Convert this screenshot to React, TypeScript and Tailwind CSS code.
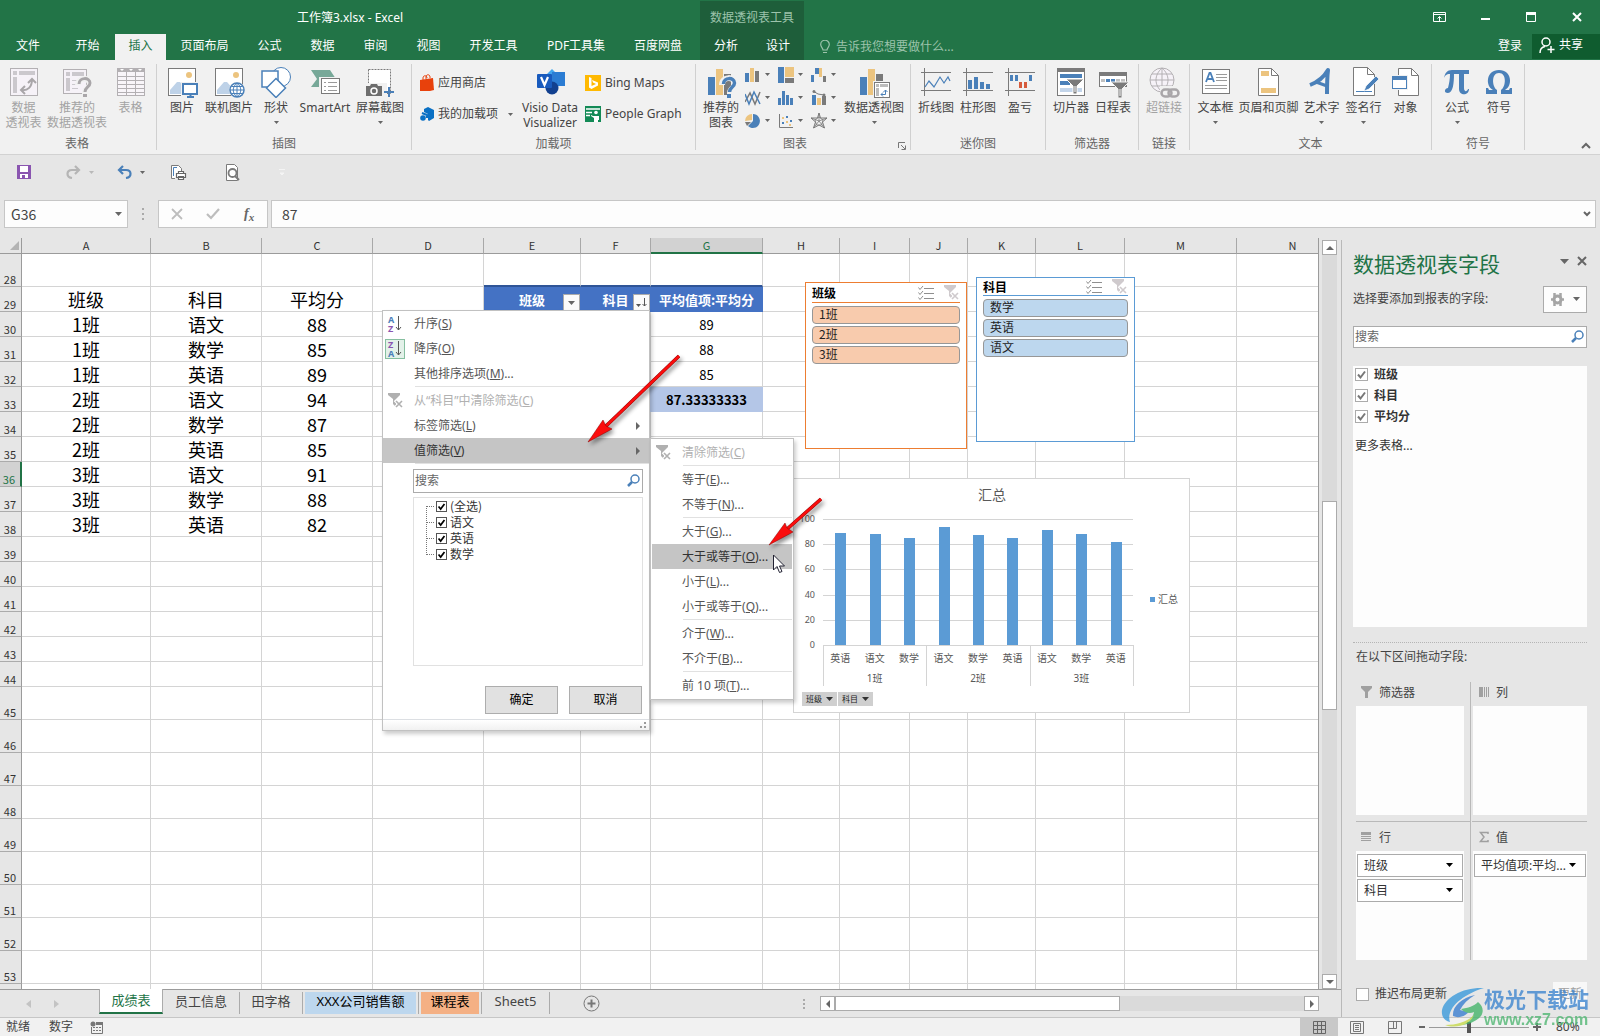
import { useState } from 'react'
import type { ReactNode } from 'react'

type IconProps = { children: ReactNode; w?: number; h?: number; className?: string }

const BLUE = '#4a80b9'
const SAND = '#ecc47f'
const GRAY = '#7a7a7a'
const PALE = '#b3b0b3'

function Svg({ children, w = 32, h = 32, className = '' }: IconProps) {
  return (
    <svg width={w} height={h} viewBox={`0 0 ${w} ${h}`} fill="none" className={`shrink-0 ${className}`} aria-hidden="true">
      {children}
    </svg>
  )
}

function Caret({ color = '#666', w = 5, className = '' }: { color?: string; w?: number; className?: string }) {
  return (
    <svg width={w} height={w === 5 ? 3 : w === 7 ? 4 : 5} viewBox="0 0 10 6" preserveAspectRatio="none" className={`shrink-0 ${className}`} aria-hidden="true">
      <path d="M0 0h10L5 6z" fill={color} />
    </svg>
  )
}

/* ---------- Ribbon icons ---------- */

const PivotTableIcon = () => (
  <Svg>
    <rect x="2.5" y="2.5" width="27" height="27" fill="#f6f2f8" stroke={PALE} />
    <path d="M5 5h4v4H5zM11 5h16v4H11zM5 11h4v16H5z" fill="#cbc8cd" />
    <path d="M13 24c7 1 11-3 11-11M17 20l-4 4 4 4M20 17l4-4 4 4" stroke="#a9a6a9" strokeWidth="2" />
  </Svg>
)

const RecommendedPivotIcon = () => (
  <Svg>
    <rect x="2.5" y="3.5" width="23" height="24" fill="#f6f2f8" stroke={PALE} />
    <path d="M5 6h4v4H5zM11 6h12v4H11zM5 12h4v13H5z" fill="#cbc8cd" />
    <path d="M11 14.5h8M11 18.5h6M11 22.500h6" stroke="#cbc8cd" />
    <path d="M17 19c0-8 12-8 12-1 0 4-5 4-5 8v6" stroke="#f1f1f1" strokeWidth="6" />
    <path d="M18 18c0-7 11-7 11-1 0 4-5 4-5 9" stroke="#a9a6a9" strokeWidth="3" />
    <path d="M22 28h4v3h-4z" fill="#a9a6a9" />
  </Svg>
)

const TableIcon = () => (
  <Svg>
    <rect x="2.5" y="2.5" width="27" height="27" fill="#f8f5f9" stroke={PALE} />
    <path d="M2 2h28v4H2z" fill={PALE} />
    <path d="M5 3h4L7 5zM14 3h4l-2 2zM23 3h4l-2 2z" fill="#fff" />
    <path d="M11.5 6v24M20.5 6v24M2 10.5h28M2 14.5h28M2 18.5h28M2 22.5h28M2 26.5h28" stroke={PALE} />
  </Svg>
)

const photo = (
  <>
    <rect x="2.5" y="2.5" width="27" height="27" fill="#fff" stroke={GRAY} />
    <path d="M4 28v-4l7-8h3l7 8v4z" fill="#bed2e8" />
    <circle cx="23" cy="9" r="3" fill={SAND} />
  </>
)

const PictureIcon = () => (
  <Svg>
    {photo}
    <path d="M15 16h17v16H15z" fill="#f1f1f1" />
    <rect x="17" y="18" width="14" height="10" fill="#fff" stroke={BLUE} strokeWidth="2" />
    <path d="M21 31h7M24.5 29v2" stroke={BLUE} strokeWidth="2" />
  </Svg>
)

const OnlinePictureIcon = () => (
  <Svg>
    {photo}
    <circle cx="24" cy="24" r="8" fill="#f1f1f1" />
    <circle cx="24" cy="24" r="7" fill="#fff" stroke={BLUE} strokeWidth="1.5" />
    <path d="M24 17v14M17 24h14M18.5 20.5h11M18.5 27.5h11M24 17c-5 4-5 10 0 14M24 17c5 4 5 10 0 14" stroke={BLUE} />
  </Svg>
)

const ShapesIcon = () => (
  <Svg>
    <circle cx="21" cy="11" r="9.5" fill="#fff" stroke={BLUE} />
    <rect x="2" y="5" width="16" height="16" fill="#fff" stroke={BLUE} strokeWidth="1.5" />
    <path d="M16 12.5l9.5 9.5-9.5 9.5L6.500 22z" fill="#fff" stroke={BLUE} strokeWidth="1.5" />
  </Svg>
)

const SmartArtIcon = () => (
  <Svg>
    <path d="M2 4h19l6 9-6 8H2l6-8z" fill="#77a898" />
    <path d="M10 11h22v19H10z" fill="#f1f1f1" />
    <rect x="12.5" y="12.5" width="18" height="15" fill="#fff" stroke={GRAY} />
    <path d="M15 16.5h2M19 16.5h9M15 20.5h2M19 20.5h9M15 24.5h2M19 24.5h9" stroke="#9b9b9b" />
  </Svg>
)

const ScreenshotIcon = () => (
  <Svg>
    <rect x="4.5" y="3.5" width="22" height="24" fill="#fff" stroke={GRAY} strokeDasharray="2 1" />
    <path d="M1 17h22v14H1z" fill="#f1f1f1" />
    <path d="M2 20h4l1-2h6l1 2h4v10H2z" fill="#6e6e6e" />
    <circle cx="10" cy="25" r="3" stroke="#fff" strokeWidth="1.5" />
    <path d="M20 26h10M25 21v10" stroke={BLUE} strokeWidth="2" />
  </Svg>
)

const StoreIcon = () => (
  <Svg w={14} h={18}>
    <path d="M0 6l13-2 1 12-4 1H0z" fill="#e8410c" />
    <path d="M3 6V4c0-3 4-3 4 0M6 5V3c0-3 4-3 4 0v1" stroke="#e8410c" />
  </Svg>
)

const MyAddinsIcon = () => (
  <Svg w={14} h={16}>
    <path d="M8 1l6 3v8l-5 3-1-1V8L4 6V3z" fill="#0a70c4" />
    <circle cx="3" cy="12" r="2.800" fill="#0a70c4" />
    <path d="M2 7l5 2v3" stroke="#0a70c4" strokeWidth="2" />
  </Svg>
)

const VisioIcon = () => (
  <Svg>
    <path d="M18 3l8 8-8 8-8-8z" fill="#41a5ee" />
    <path d="M18 6h13v14H18z" fill="#2b7cd3" />
    <circle cx="18" cy="22" r="6.500" fill="#12408f" />
    <rect x="3" y="8" width="15" height="14" rx="1" fill="#185abd" />
    <path d="M7 11l3.500 8L14 11" stroke="#fff" strokeWidth="2.200" />
  </Svg>
)

const BingIcon = () => (
  <Svg w={16} h={16}>
    <path d="M0 0h16v16H0z" fill="#ffb901" />
    <path d="M4 2l2.500 1v8L11 9 8 7.500 7 5l6 2.500v3L6.500 14 4 12.500z" fill="#fff" />
  </Svg>
)

const PeopleGraphIcon = () => (
  <Svg w={16} h={16}>
    <path d="M0 0h16v16H0z" fill="#138a56" />
    <path d="M1 3h14M1 6.5h6M1 9.5h4" stroke="#fff" strokeWidth="1.500" />
    <circle cx="11" cy="6.5" r="1.800" fill="#fff" />
    <path d="M6 9l2 1h6v4h-1v2H9v-4L6 10z" fill="#fff" />
  </Svg>
)

const RecommendedChartIcon = () => (
  <Svg>
    <path d="M3 11h7v18H3z" fill={BLUE} />
    <path d="M11 3h7v26h-7z" fill={SAND} />
    <path d="M19 8h7v21h-7z" fill={GRAY} />
    <path d="M17 19c0-9 13-9 13-1 0 4-5 4-5 9v5" stroke="#f1f1f1" strokeWidth="6" />
    <path d="M18.500 18c0-7 11-7 11-1 0 4-5 4-5 9" stroke={BLUE} strokeWidth="3.500" />
    <path d="M22 28h4v4h-4z" fill={BLUE} />
  </Svg>
)

const PivotChartIcon = () => (
  <Svg>
    <path d="M2 11h7v18H2z" fill={BLUE} />
    <path d="M10 3h7v26h-7z" fill={SAND} />
    <path d="M18 8h7v12h-7z" fill={GRAY} />
    <rect x="15" y="15" width="17" height="17" fill="#f1f1f1" />
    <rect x="16.5" y="16.5" width="15" height="15" fill="#fff" stroke={GRAY} />
    <path d="M18 18h3v3h-3zM22 18h8v3h-8zM18 22h3v8h-3z" fill="#bcbcbc" />
    <path d="M23 28.5h4.500V24M25 26.500l-2 2 2 2M25.500 26l2-2 2 2" stroke={BLUE} />
  </Svg>
)

const axis = <path d="M4.5 2v28M1 6.5h30M1 24.5h30" stroke={GRAY} />

const SparkLineIcon = () => (
  <Svg>
    {axis}
    <path d="M5 21l4-6 5 6 6-10 4 6 4-6 2 4" stroke={BLUE} strokeWidth="1.200" />
  </Svg>
)

const SparkColumnIcon = () => (
  <Svg>
    {axis}
    <path d="M6 14h4v9H6zM12 11h4v12h-4zM18 16h4v7h-4zM24 18h4v5h-4z" fill={BLUE} />
  </Svg>
)

const WinLossIcon = () => (
  <Svg>
    {axis}
    <path d="M6 9h3v6H6zM11 9h3v6h-3zM25 9h3v6h-3z" fill={BLUE} />
    <path d="M15 16h3v6h-3zM20 16h3v6h-3z" fill="#d65b3c" />
  </Svg>
)

const SlicerIcon = () => (
  <Svg>
    <rect x="2.5" y="2.5" width="27" height="27" fill="#fff" stroke={GRAY} />
    <path d="M2 2h28v4H2z" fill={GRAY} />
    <path d="M5 8h22v4H5zM5 15h10v4H5z" fill={BLUE} />
    <path d="M5 22h22v4H5z" fill="#c3d5ea" />
    <path d="M11 13h18l-7 7v8h-4v-8z" fill={GRAY} stroke="#fff" />
    <path d="M20 20v6" stroke="#fff" />
  </Svg>
)

const TimelineIcon = () => (
  <Svg>
    <rect x="2.5" y="6.5" width="27" height="14" fill="#fff" stroke={GRAY} />
    <path d="M2 6h28v4H2z" fill={GRAY} />
    <path d="M4 13h4v3H4zM19 13h4v3h-4zM24 13h4v3h-4z" fill="#c0c0c0" />
    <path d="M9 13h4v3H9zM14 13h4v3h-4z" fill={BLUE} />
    <path d="M14 16h18l-7 7v9h-4v-9z" fill={GRAY} stroke="#f1f1f1" />
    <path d="M23 23v7" stroke="#fff" />
  </Svg>
)

const HyperlinkIcon = () => (
  <Svg>
    <circle cx="14" cy="14" r="12" fill="#f6f2f8" stroke={PALE} />
    <path d="M14 2v24M2 14h24M4 8h20M4 20h20M14 2c-8 7-8 17 0 24M14 2c8 7 8 17 0 24" stroke={PALE} />
    <path d="M12 20h20v12H12z" fill="#f1f1f1" />
    <rect x="13.500" y="23.500" width="10" height="7" rx="3.500" stroke="#a9a6a9" strokeWidth="2.500" />
    <rect x="20.500" y="23.500" width="10" height="7" rx="3.500" stroke="#a9a6a9" strokeWidth="2.500" />
  </Svg>
)

const TextBoxIcon = () => (
  <Svg>
    <rect x="2.5" y="3.5" width="27" height="24" fill="#fff" stroke={GRAY} />
    <path d="M6 16L9.500 7h1L14 16M7.500 13h5" stroke={BLUE} strokeWidth="1.800" />
    <path d="M16 8.5h11M16 11.5h11M16 14.5h11M5 19.5h22M5 22.5h22" stroke="#9b9b9b" />
  </Svg>
)

const HeaderFooterIcon = () => (
  <Svg>
    <path d="M5.5 2.5h13l7 7v20h-20z" fill="#fff" stroke={GRAY} />
    <path d="M18.5 2.5v7h7" stroke={GRAY} />
    <path d="M8 5h8v5H8zM8 22h15v5H8z" fill={SAND} />
  </Svg>
)

const WordArtIcon = () => (
  <Svg>
    <path d="M4 19c8-3 14-8 18-15-1 8-1 16-1 24" stroke={BLUE} strokeWidth="4" strokeLinejoin="round" />
    <path d="M10 16l11 4" stroke={BLUE} strokeWidth="3" />
  </Svg>
)

const SignatureIcon = () => (
  <Svg>
    <path d="M5.5 1.5h14l7 7v21h-21z" fill="#fff" stroke={GRAY} />
    <path d="M19.5 1.5v7h7" stroke={GRAY} />
    <path d="M8 25.5h16" stroke={BLUE} />
    <path d="M16 25l2-5L28 10l3 3-10 10z" fill={BLUE} stroke="#fff" strokeWidth="0.700" />
  </Svg>
)

const ObjectIcon = () => (
  <Svg>
    <path d="M8.5 2.5h13l7 7v20h-20z" fill="#fff" stroke={GRAY} />
    <path d="M21.5 2.5v7h7" stroke={GRAY} />
    <path d="M1 9h17v15H1z" fill="#f1f1f1" />
    <rect x="2.5" y="10.5" width="14" height="12" fill="#fff" stroke={BLUE} />
    <path d="M2 10h15v4H2z" fill={BLUE} />
  </Svg>
)

const EquationIcon = () => (
  <Svg>
    <path d="M3 12c1-5 3-8 8-8h17v4h-5v14c0 4 3 4 4 1h1c0 7-10 7-10 0V8h-5c0 9-1 19-6 19-5 0-3-5 0-5 1-4 2-9 2-14-4 0-5 2-6 4z" fill={BLUE} />
  </Svg>
)

const SymbolIcon = () => (
  <Svg>
    <path d="M3 28v-6h2l1 2h4C2 20 3 4 16 4s14 16 6 20h4l1-2h2v6H18v-4c5-3 6-17-2-17s-7 14-2 17v4z" fill={BLUE} />
  </Svg>
)

/* ---------- Small chart pickers ---------- */

const chartPickers: { name: string; icon: ReactNode }[] = [
  {
    name: '柱形图',
    icon: (
      <>
        <path d="M0 6h4v9H0z" fill={BLUE} />
        <path d="M5 1h4v14H5z" fill={SAND} />
        <path d="M10 4h4v11h-4z" fill={GRAY} />
      </>
    ),
  },
  {
    name: '层次结构图',
    icon: (
      <>
        <path d="M0 0h6v16H0z" fill={BLUE} />
        <path d="M7 0h9v10H7z" fill={SAND} />
        <path d="M7 11h9v5H7z" fill={GRAY} />
      </>
    ),
  },
  {
    name: '瀑布图',
    icon: (
      <>
        <path d="M0 8h3v7H0zM4 1h4v6H4z" fill={BLUE} />
        <path d="M8 1h3v9H8z" fill={SAND} />
        <path d="M12 9h3v6h-3z" fill={GRAY} />
      </>
    ),
  },
  {
    name: '折线图',
    icon: (
      <>
        <path d="M0 12l5-9 5 11 5-12" stroke={GRAY} strokeWidth="1.500" />
        <path d="M0 4l4 10L9 2l6 12" stroke={BLUE} strokeWidth="1.500" />
      </>
    ),
  },
  {
    name: '统计图',
    icon: <path d="M0 8h3v7H0zM4 1h3v14H4zM8 5h3v10H8zM12 8h3v7h-3z" fill={BLUE} />,
  },
  {
    name: '组合图',
    icon: (
      <>
        <path d="M1 5h4v10H1z" fill={BLUE} />
        <path d="M6 8h4v7H6z" fill={SAND} />
        <path d="M11 6h4v9h-4z" fill={GRAY} />
        <path d="M2 1l5 3 6 1" stroke={GRAY} />
        <circle cx="3" cy="1.500" r="1.500" fill={GRAY} />
        <circle cx="13" cy="5" r="1.500" fill={GRAY} />
      </>
    ),
  },
  {
    name: '饼图',
    icon: (
      <>
        <path d="M7 7V1a7 7 0 0 0-7 7z" fill={SAND} />
        <path d="M8 1a7 7 0 1 1-5 12l5-5z" fill={BLUE} />
        <path d="M0 9h6l-4 4z" fill={GRAY} />
      </>
    ),
  },
  {
    name: '散点图',
    icon: (
      <>
        <path d="M1.500 1v13.500H15" stroke={GRAY} />
        <path d="M4 9h2v2H4zM8 3h2v2H8zM12 7h2v2h-2z" fill={BLUE} />
        <path d="M4 4h2v2H4zM8 8h2v2H8zM11 11h2v2h-2z" fill={SAND} />
      </>
    ),
  },
  {
    name: '雷达图',
    icon: (
      <>
        <path d="M8 0l1.500 5H16l-4.500 4 2 6L8 12l-5.500 3 2-6L0 5h6.500z" stroke={GRAY} />
        <path d="M8 4l4 3-1.500 5h-5L4 7zM8 0v8l8-3M8 8l5.500 7M8 8l-5.500 7M8 8L0 5" stroke={GRAY} strokeWidth="0.800" />
      </>
    ),
  },
]

/* ---------- Ribbon ---------- */

type BigProps = { icon: ReactNode; lines: string[]; width: string; caret?: boolean; disabled?: boolean }

function BigButton({ icon, lines, width, caret, disabled }: BigProps) {
  return (
    <button
      type="button"
      disabled={disabled}
      className={`flex shrink-0 flex-col items-center text-xs leading-[15px] whitespace-nowrap ${width} ${disabled ? 'text-[#a3a3a3]' : 'text-[#444]'}`}
    >
      <span className="mb-[2px]">{icon}</span>
      {lines.map((line) => (
        <span key={line}>{line}</span>
      ))}
      {caret && <Caret className="mt-[6px]" />}
    </button>
  )
}

type GroupProps = { label: string; width: string; children: ReactNode; launcher?: boolean }

function Group({ label, width, children, launcher }: GroupProps) {
  return (
    <section className={`relative mt-1 flex h-[86px] shrink-0 flex-col border-r border-[#d0d0d0] ${width}`}>
      <div className="flex flex-1 justify-center pt-[2px]">{children}</div>
      <h2 className={`h-[14px] text-center text-xs leading-4 text-[#666] ${launcher ? 'pr-4' : ''}`}>{label}</h2>
      {launcher && (
        <button type="button" aria-label="查看所有图表" className="absolute right-[4px] bottom-0">
          <Svg w={8} h={8}>
            <path d="M.5 6V.5H7M3 3l4 4M7.500 3.500v4h-4" stroke="#777" />
          </Svg>
        </button>
      )}
    </section>
  )
}

function Ribbon() {
  return (
    <div className="relative flex h-[95px] shrink-0 border-b border-[#d2d2d2] bg-[#f1f1f1]">
      <Group label="表格" width="w-[157px] pr-[2px]">
        <BigButton icon={<PivotTableIcon />} lines={['数据', '透视表']} width="w-[42px]" disabled />
        <BigButton icon={<RecommendedPivotIcon />} lines={['推荐的', '数据透视表']} width="w-[65px]" disabled />
        <BigButton icon={<TableIcon />} lines={['表格']} width="w-[42px]" disabled />
      </Group>
      <Group label="插图" width="w-[255px]">
        <BigButton icon={<PictureIcon />} lines={['图片']} width="w-[40px]" />
        <BigButton icon={<OnlinePictureIcon />} lines={['联机图片']} width="w-[54px]" />
        <BigButton icon={<ShapesIcon />} lines={['形状']} width="w-[40px]" caret />
        <BigButton icon={<SmartArtIcon />} lines={['SmartArt']} width="w-[58px]" />
        <BigButton icon={<ScreenshotIcon />} lines={['屏幕截图']} width="w-[52px]" caret />
      </Group>
      <Group label="加载项" width="w-[284px]">
        <div className="flex flex-1 pl-2 text-xs text-[#444]">
          <div className="flex w-[98px] flex-col gap-[15px] pt-[9px]">
            <button type="button" className="flex h-4 items-center gap-[4px] whitespace-nowrap">
              <StoreIcon />
              应用商店
            </button>
            <button type="button" className="flex h-4 items-center gap-[4px] whitespace-nowrap">
              <MyAddinsIcon />
              我的加载项
              <Caret className="ml-[6px]" />
            </button>
          </div>
          <BigButton icon={<VisioIcon />} lines={['Visio Data', 'Visualizer']} width="w-[64px]" />
          <div className="flex flex-col gap-[15px] pt-[9px] pl-[3px]">
            <button type="button" className="flex h-4 items-center gap-[4px] whitespace-nowrap">
              <BingIcon />
              Bing Maps
            </button>
            <button type="button" className="flex h-4 items-center gap-[4px] whitespace-nowrap">
              <PeopleGraphIcon />
              People Graph
            </button>
          </div>
        </div>
      </Group>
      <Group label="图表" width="w-[215px]" launcher>
        <BigButton icon={<RecommendedChartIcon />} lines={['推荐的', '图表']} width="w-[40px]" />
        <div className="-mt-[3px] grid grid-cols-[33px_33px_32px] grid-rows-[23px_23px_23px] pl-[4px]">
          {chartPickers.map((c) => (
            <button key={c.name} type="button" aria-label={c.name} className="flex items-center gap-[4px]">
              <Svg w={16} h={16}>
                {c.icon}
              </Svg>
              <Caret />
            </button>
          ))}
        </div>
        <BigButton icon={<PivotChartIcon />} lines={['数据透视图']} width="w-[62px]" caret />
      </Group>
      <Group label="迷你图" width="w-[135px]">
        <BigButton icon={<SparkLineIcon />} lines={['折线图']} width="w-[42px]" />
        <BigButton icon={<SparkColumnIcon />} lines={['柱形图']} width="w-[42px]" />
        <BigButton icon={<WinLossIcon />} lines={['盈亏']} width="w-[42px]" />
      </Group>
      <Group label="筛选器" width="w-[93px]">
        <BigButton icon={<SlicerIcon />} lines={['切片器']} width="w-[42px]" />
        <BigButton icon={<TimelineIcon />} lines={['日程表']} width="w-[42px]" />
      </Group>
      <Group label="链接" width="w-[51px]">
        <BigButton icon={<HyperlinkIcon />} lines={['超链接']} width="w-[42px]" disabled />
      </Group>
      <Group label="文本" width="w-[242px]">
        <BigButton icon={<TextBoxIcon />} lines={['文本框']} width="w-[42px]" caret />
        <BigButton icon={<HeaderFooterIcon />} lines={['页眉和页脚']} width="w-[64px]" />
        <BigButton icon={<WordArtIcon />} lines={['艺术字']} width="w-[42px]" caret />
        <BigButton icon={<SignatureIcon />} lines={['签名行']} width="w-[42px]" caret />
        <BigButton icon={<ObjectIcon />} lines={['对象']} width="w-[42px]" />
      </Group>
      <Group label="符号" width="w-[93px]">
        <BigButton icon={<EquationIcon />} lines={['公式']} width="w-[42px]" caret />
        <BigButton icon={<SymbolIcon />} lines={['符号']} width="w-[42px]" />
      </Group>
      <button type="button" aria-label="折叠功能区" className="mt-auto mr-[9px] mb-[4px] ml-auto">
        <Svg w={10} h={8}>
          <path d="M1 6l4-4 4 4" stroke="#666" strokeWidth="2" />
        </Svg>
      </button>
    </div>
  )
}

/* ---------- Title bar and tabs ---------- */

const tabs = [
  { name: '文件', width: 'w-[60px] pr-[4px]' },
  { name: '开始', width: 'w-[55px]' },
  { name: '插入', width: 'w-[51px]' },
  { name: '页面布局', width: 'w-[77px]' },
  { name: '公式', width: 'w-[53px]' },
  { name: '数据', width: 'w-[53px]' },
  { name: '审阅', width: 'w-[53px]' },
  { name: '视图', width: 'w-[53px]' },
  { name: '开发工具', width: 'w-[77px]' },
  { name: 'PDF工具集', width: 'w-[88px]' },
  { name: '百度网盘', width: 'w-[80px] pr-[4px]' },
]

function TitleBar() {
  return (
    <header className="shrink-0 bg-[#227447] text-xs text-white">
      <div className="flex h-[34px]">
        <h1 className="flex w-[700px] items-center justify-center pt-px">工作簿3.xlsx - Excel</h1>
        <div className="mt-px flex w-[104px] items-center justify-center bg-[#1e5e3a] text-[#9cc3ab]">数据透视表工具</div>
        <div className="flex flex-1 justify-end">
          <button type="button" aria-label="功能区显示选项" className="flex w-[46px] items-center justify-center">
            <Svg w={13} h={10}>
              <path d="M.5.5h12v9H.5zM.5 2.500h12M6.500 9V4.500M4.500 6.500l2-2 2 2" stroke="#fff" />
            </Svg>
          </button>
          <button type="button" aria-label="最小化" className="flex w-[46px] items-center justify-center">
            <Svg w={9} h={10}>
              <path d="M0 6h9v2H0z" fill="#fff" />
            </Svg>
          </button>
          <button type="button" aria-label="最大化" className="flex w-[46px] items-center justify-center">
            <Svg w={10} h={10}>
              <path d="M.5.5h9v9h-9z" stroke="#fff" />
              <path d="M0 0h10v3H0z" fill="#fff" />
            </Svg>
          </button>
          <button type="button" aria-label="关闭" className="flex w-[46px] items-center justify-center">
            <Svg w={10} h={10}>
              <path d="M1 1l8 8M9 1L1 9" stroke="#fff" strokeWidth="2" />
            </Svg>
          </button>
        </div>
      </div>
      <nav className="flex h-[26px]">
        {tabs.map((t) => (
          <button
            key={t.name}
            type="button"
            className={`pb-[3px] text-center whitespace-nowrap ${t.width} ${t.name === '插入' ? 'bg-[#f1f1f1] text-[#227447]' : ''}`}
          >
            {t.name}
          </button>
        ))}
        <button type="button" className="w-[52px] bg-[#1e5e3a] pb-[3px]">分析</button>
        <button type="button" className="w-[52px] bg-[#1e5e3a] pb-[3px]">设计</button>
        <label className="ml-[16px] flex items-center gap-[6px]">
          <Svg w={10} h={14}>
            <path d="M3 10C3 8 .7 7 .7 4.500a4.300 4.300 0 0 1 8.600 0C9.300 7 7 8 7 10zM3 12.500h4" stroke="#9cc3ab" strokeWidth="1.200" />
          </Svg>
          <input aria-label="告诉我您想要做什么" placeholder="告诉我您想要做什么..." className="w-[150px] bg-transparent pb-px outline-none placeholder:text-[#9cc3ab]" />
        </label>
        <button type="button" className="ml-auto w-[44px] pb-[3px]">登录</button>
        <button type="button" className="mb-px flex w-[68px] items-center gap-[4px] bg-[#0f5c2f] pb-[3px] pl-[7px]">
          <Svg w={16} h={16}>
            <circle cx="7" cy="5" r="4" stroke="#fff" strokeWidth="1.500" />
            <path d="M1 16c0-4 2-6 5-6.500M12 9v7M8.500 12.500h7" stroke="#fff" strokeWidth="1.500" />
          </Svg>
          共享
        </button>
      </nav>
    </header>
  )
}

/* ---------- Quick access and formula bar ---------- */

function QuickAccess() {
  return (
    <div className="flex h-[34px] items-center pl-[17px]">
      <button type="button" aria-label="保存">
        <Svg w={14} h={14}>
          <path d="M0 0h14v14H0z" fill="#8a55b0" />
          <path d="M3 1h8v6H3zM3 9h8v4H3z" fill="#fff" />
          <path d="M5 10h3v3H5z" fill="#8a55b0" />
        </Svg>
      </button>
      <button type="button" aria-label="恢复" className="ml-[35px] flex items-center gap-[8px]">
        <Svg w={15} h={14}>
          <path d="M9 1l4 4-4 4M13 5H6c-6 0-6 7 0 8" stroke="#b5b5b5" strokeWidth="2.200" />
        </Svg>
        <Caret color="#b9b9b9" />
      </button>
      <button type="button" aria-label="撤消" className="ml-[23px] flex items-center gap-[8px]">
        <Svg w={15} h={14}>
          <path d="M6 1L2 5l4 4M2 5h7c6 0 6 7 0 8" stroke={BLUE} strokeWidth="2.200" />
        </Svg>
        <Caret />
      </button>
      <button type="button" aria-label="快速打印" className="ml-[25px]">
        <Svg w={17} h={17}>
          <path d="M5 14.500H1.500v-13h7l3 3v3" fill="#fff" stroke={GRAY} />
          <path d="M7 3.500H3.500V12" stroke={BLUE} />
          <path d="M8.500 9.500v-2h5v2M6.500 9.500h9v4h-9zM8.500 12.500h5v3h-5z" fill="#fff" stroke="#666" strokeWidth="1.200" />
        </Svg>
      </button>
      <button type="button" aria-label="打印预览" className="ml-[38px]">
        <Svg w={16} h={17}>
          <path d="M1.500.5h8l3 3v13h-11z" fill="#fff" stroke={GRAY} />
          <circle cx="7.500" cy="9" r="4" fill="#fff" stroke={GRAY} strokeWidth="1.800" />
          <path d="M10 12l4 4" stroke={GRAY} strokeWidth="2" />
        </Svg>
      </button>
      <Svg w={6} h={7} className="ml-[38px]">
        <path d="M0 .5h6M1 4h4L3 6z" stroke="#f4f4f4" fill="#f4f4f4" />
      </Svg>
    </div>
  )
}

function FormulaBar() {
  return (
    <div className="mt-[11px] flex h-[28px] shrink-0 px-[4px] text-[#444]">
      <div className="flex w-[124px] items-center border border-[#c6c6c6] bg-[#fdfdfd] pr-[5px] pb-px pl-[6px]">
        <input aria-label="名称框" defaultValue="G36" className="w-full min-w-0 bg-transparent font-['Noto_Sans_CJK_SC',sans-serif] text-sm outline-none" />
        <Caret w={7} />
      </div>
      <div className="flex w-[30px] flex-col items-center justify-center gap-[3px]">
        <i className="size-[2px] bg-[#aaa]" />
        <i className="size-[2px] bg-[#aaa]" />
        <i className="size-[2px] bg-[#aaa]" />
      </div>
      <div className="flex w-[110px] items-center border border-[#c6c6c6] bg-[#fdfdfd] pl-[12px]">
        <Svg w={12} h={12}>
          <path d="M1 1l10 10M11 1L1 11" stroke="#bdbdbd" strokeWidth="1.800" />
        </Svg>
        <Svg w={14} h={12} className="ml-[23px]">
          <path d="M1 6l4 4 8-9" stroke="#bdbdbd" strokeWidth="2.200" />
        </Svg>
        <span className="ml-[24px] font-['Liberation_Serif',serif] text-sm font-bold text-[#666] italic">
          f<sub className="text-[11px]">x</sub>
        </span>
      </div>
      <div className="ml-[3px] flex flex-1 items-center border border-[#c6c6c6] bg-[#fdfdfd] pr-[4px] pb-px pl-[10px]">
        <input aria-label="编辑栏" defaultValue="87" className="flex-1 bg-transparent font-['Noto_Sans_CJK_SC',sans-serif] text-sm outline-none" />
        <Svg w={8} h={6}>
          <path d="M1 1l3 3 3-3" stroke="#666" strokeWidth="2" />
        </Svg>
      </div>
    </div>
  )
}

/* ---------- Sheet ---------- */

const columns = [
  { name: 'A', width: 'w-[129px]' },
  { name: 'B', width: 'w-[111px]' },
  { name: 'C', width: 'w-[111px]' },
  { name: 'D', width: 'w-[111px]' },
  { name: 'E', width: 'w-[97px]' },
  { name: 'F', width: 'w-[70px]' },
  { name: 'G', width: 'w-[112px]' },
  { name: 'H', width: 'w-[77px]' },
  { name: 'I', width: 'w-[70px]' },
  { name: 'J', width: 'w-[58px]' },
  { name: 'K', width: 'w-[68px]' },
  { name: 'L', width: 'w-[89px]' },
  { name: 'M', width: 'w-[112px]' },
  { name: 'N', width: 'w-[112px]' },
]

const scores: Record<number, string[]> = {
  29: ['班级', '科目', '平均分'],
  30: ['1班', '语文', '88'],
  31: ['1班', '数学', '85'],
  32: ['1班', '英语', '89'],
  33: ['2班', '语文', '94'],
  34: ['2班', '数学', '87'],
  35: ['2班', '英语', '85'],
  36: ['3班', '语文', '91'],
  37: ['3班', '数学', '88'],
  38: ['3班', '英语', '82'],
}

const pivot: Record<number, Record<string, string>> = {
  29: { E: '班级', F: '科目', G: '平均值项:平均分' },
  30: { G: '89' },
  31: { G: '88' },
  32: { G: '85' },
  33: { G: '87.33333333' },
}

const LAST_ROW = 54
const rows = Array.from({ length: 27 }, (_, i) => 28 + i)

function cellClass(row: number, col: string) {
  const inPivot = col === 'E' || col === 'F' || col === 'G'
  if (row === 28 && inPivot) return 'border-r border-b-2 border-r-[#d4d4d4] border-b-[#2f5597]'
  if (row === 29 && inPivot) return 'border-r border-b border-[#4472c4] bg-[#4472c4] pt-px text-[13px] font-bold text-white'
  if (row === 33 && inPivot) return 'border-r border-b border-[#b4c6e7] bg-[#b4c6e7] pt-[2px] text-[13px] font-bold text-black'
  if (inPivot) return 'border-r border-b border-[#d4d4d4] pt-[2px] text-[13px] text-black'
  return 'border-r border-b border-[#d4d4d4] text-lg text-black'
}

function FilterButton({ sorted }: { sorted?: boolean }) {
  return (
    <button
      type="button"
      aria-label="筛选"
      className="absolute right-0 bottom-0 flex size-[17px] items-center justify-center border border-[#ababab] bg-[#fbfbfb]"
    >
      {sorted ? (
        <Svg w={13} h={11}>
          <path d="M1 7h5L3.500 10z" fill="#555" />
          <path d="M9.500 1v8M7.500 7l2 2 2-2" stroke="#555" />
        </Svg>
      ) : (
        <Caret w={7} />
      )}
    </button>
  )
}

function SheetTable() {
  return (
    <table className="w-[1349px] table-fixed border-separate border-spacing-0 bg-white font-['Noto_Sans_CJK_SC',sans-serif]">
      <colgroup>
        <col className="w-[22px]" />
        {columns.map((c) => (
          <col key={c.name} className={c.width} />
        ))}
      </colgroup>
      <thead>
        <tr className="h-[16px]">
          <th className="border-r border-b border-[#9b9b9b] bg-[#e6e6e6] p-0">
            <Svg w={9} h={9} className="mr-[2px] ml-auto">
              <path d="M9 0v9H0z" fill="#b3b3b3" />
            </Svg>
          </th>
          {columns.map((c) => (
            <th
              key={c.name}
              scope="col"
              className={`border-r border-r-[#a8a8a8] p-0 align-top text-[11px] leading-[14px] font-normal ${
                c.name === 'G' ? 'border-b-2 border-b-[#217346] bg-[#d2d2d2] text-[#217346]' : 'border-b border-b-[#9b9b9b] bg-[#e6e6e6] text-[#333]'
              }`}
            >
              {c.name}
            </th>
          ))}
        </tr>
      </thead>
      <tbody>
        {rows.map((r) => (
          <tr key={r} className={r === 28 || r > 44 ? 'h-[33px]' : 'h-[25px]'}>
            <th
              scope="row"
              className={`border-b border-b-[#ababab] p-0 pr-[5px] text-right align-bottom text-[11px] leading-[13px] font-normal ${
                r === 36 ? 'border-r-2 border-r-[#217346] bg-[#d2d2d2] text-[#217346]' : 'border-r border-r-[#9b9b9b] bg-[#e6e6e6] text-[#333]'
              }`}
            >
              {r < LAST_ROW && r}
            </th>
            {columns.map((c, i) => {
              const text = i < 3 ? scores[r]?.[i] : pivot[r]?.[c.name]
              return (
                <td key={c.name} className={`relative p-0 text-center leading-[22px] whitespace-nowrap ${cellClass(r, c.name)}`}>
                  {text}
                  {r === 29 && c.name === 'E' && <FilterButton />}
                  {r === 29 && c.name === 'F' && <FilterButton sorted />}
                </td>
              )
            })}
          </tr>
        ))}
      </tbody>
    </table>
  )
}

const MultiSelectIcon = () => (
  <Svg w={16} h={14}>
    <path d="M6 2.5h10M6 7.5h10M6 12.5h10" stroke="#8f8f8f" />
    <path d="M.5 1.500l1.500 2L5 0M.5 6.500l1.500 2L5 5M.5 11.500l1.500 2L5 10" stroke="#8f8f8f" />
  </Svg>
)

const ClearFilterIcon = ({ color = '#b0b0b0' }: { color?: string }) => (
  <Svg w={16} h={16}>
    <path d="M0 0h12v2L8 6v8l-3-3V6L0 2z" fill={color} />
    <path d="M7 7l8 8M15 7l-8 8" stroke="#fff" strokeWidth="3.500" />
    <path d="M8 8l6 6M14 8l-6 6" stroke={color} strokeWidth="1.600" />
  </Svg>
)

type SlicerProps = { title: string; items: string[]; frame: string; head: string; chip: string }

function Slicer({ title, items, frame, head, chip }: SlicerProps) {
  return (
    <section className={`absolute flex flex-col border bg-white px-[6px] font-['Noto_Sans_CJK_SC',sans-serif] text-xs ${frame}`}>
      <div className={`flex items-center border-b ${head}`}>
        <h3 className="font-bold text-black">{title}</h3>
        <button type="button" aria-label="多选" className="ml-auto">
          <MultiSelectIcon />
        </button>
        <button type="button" aria-label="清除筛选器" className="ml-[10px]">
          <ClearFilterIcon color="#cfcacd" />
        </button>
      </div>
      <div className="mt-[3px] flex flex-col gap-[2px]">
        {items.map((item) => (
          <button key={item} type="button" className={`h-[18px] rounded border border-[#979797] pb-[3px] pl-[6px] text-left leading-[13px] text-[#222] ${chip}`}>
            {item}
          </button>
        ))}
      </div>
    </section>
  )
}

/* ---------- Pivot chart ---------- */

const chartGroups = [
  { name: '1班', bars: [['英语', 89], ['语文', 88], ['数学', 85]] as [string, number][] },
  { name: '2班', bars: [['语文', 94], ['数学', 87], ['英语', 85]] as [string, number][] },
  { name: '3班', bars: [['语文', 91], ['数学', 88], ['英语', 82]] as [string, number][] },
]

function PivotChart() {
  const left = 29
  const base = 166
  const step = 310 / 9
  const scale = 126 / 100
  return (
    <figure className="absolute top-[240px] left-[793px] h-[235px] w-[397px] border border-[#d4d4d4] bg-white">
      <svg width="395" height="233" viewBox="0 0 395 233" className="font-['Noto_Sans','Noto_Sans_CJK_SC',sans-serif]" fontSize="10" fill="#595959" textAnchor="middle">
        <text x="198" y="21" fontSize="14">汇总</text>
        {[0, 20, 40, 60, 80, 100].map((v) => (
          <g key={v}>
            <path d={`M${left} ${Math.round(base - v * scale) + 0.5}h310`} stroke="#d4d4d4" />
            <text x="21" y={Math.round(base - v * scale) + 3} fontSize="9" textAnchor="end">{v}</text>
          </g>
        ))}
        {chartGroups.map((g, gi) => (
          <g key={g.name}>
            {g.bars.map(([name, value], bi) => {
              const cx = left + (gi * 3 + bi + 0.5) * step
              return (
                <g key={name}>
                  <rect x={Math.round(cx - 5)} y={Math.round(base - value * scale)} width="11" height={Math.round(value * scale)} fill="#5b9bd5" />
                  <text x={cx} y="183">{name}</text>
                </g>
              )
            })}
            <text x={left + (gi * 3 + 1.5) * step} y="203">{g.name}</text>
          </g>
        ))}
        {[0, 1, 2, 3].map((i) => (
          <path key={i} d={`M${Math.round(left + i * 3 * step) + 0.5} 166v41`} stroke="#d4d4d4" />
        ))}
        <rect x="356" y="118" width="5" height="5" fill="#5b9bd5" />
        <text x="374" y="124">汇总</text>
      </svg>
      <div className="absolute bottom-[6px] left-[8px] flex gap-px">
        {['班级', '科目'].map((name) => (
          <button key={name} type="button" className="flex h-[14px] w-[35px] items-center gap-[4px] bg-[#cfcfcf] pl-[4px] text-[8px] text-[#222]">
            {name}
            <Caret w={7} color="#333" />
          </button>
        ))}
      </div>
    </figure>
  )
}

/* ---------- Filter menus ---------- */

function SortIcon({ first, second, active }: { first: string; second: string; active?: boolean }) {
  return (
    <span className={`flex size-[20px] items-center justify-center text-[9px] leading-[9px] font-bold ${active ? 'border border-[#86bfa0] bg-[#e3f1e9]' : ''}`}>
      <span className="flex flex-col">
        <span className={first === 'A' ? 'text-[#4a80b9]' : 'text-[#8a55b0]'}>{first}</span>
        <span className={second === 'A' ? 'text-[#4a80b9]' : 'text-[#8a55b0]'}>{second}</span>
      </span>
      <Svg w={7} h={16} className="ml-px">
        <path d="M3.500 0v14M1 11l2.500 3L6 11" stroke="#555" />
      </Svg>
    </span>
  )
}

type ItemProps = { text: string; hot: string; tail?: string; icon?: ReactNode; disabled?: boolean; active?: boolean; sub?: boolean; inset: string }

function MenuItem({ text, hot, tail = '', icon, disabled, active, sub, inset }: ItemProps) {
  return (
    <button
      type="button"
      role="menuitem"
      disabled={disabled}
      className={`flex h-[25px] w-full shrink-0 items-center text-left text-xs whitespace-nowrap ${disabled ? 'text-[#b1b1b1]' : active ? 'bg-[#c5c5c5] text-[#333]' : 'text-[#555]'}`}
    >
      <span className={`flex shrink-0 items-center ${inset}`}>{icon}</span>
      <span>
        {text}(<u>{hot}</u>){tail}
      </span>
      {sub && (
        <Svg w={5} h={8} className="mr-[8px] ml-auto">
          <path d="M0 0l4 4-4 4z" fill="#666" />
        </Svg>
      )}
    </button>
  )
}

const filterValues = ['(全选)', '语文', '英语', '数学']

function FilterMenu() {
  const inset = 'w-[31px] pl-[2px]'
  return (
    <div role="menu" className="absolute top-[72px] left-[382px] flex h-[421px] w-[268px] flex-col border border-[#c1c1c1] bg-white shadow-[2px_3px_4px_rgba(0,0,0,0.2)]">
      <MenuItem inset={inset} icon={<SortIcon first="A" second="Z" />} text="升序" hot="S" />
      <MenuItem inset={inset} icon={<SortIcon first="Z" second="A" active />} text="降序" hot="O" />
      <MenuItem inset={inset} text="其他排序选项" hot="M" tail="..." />
      <hr className="mb-px ml-[32px] border-[#e1e1e1]" />
      <MenuItem inset={inset} icon={<span className="pl-[3px]"><ClearFilterIcon /></span>} text="从“科目”中清除筛选" hot="C" disabled />
      <MenuItem inset={inset} text="标签筛选" hot="L" sub />
      <MenuItem inset={inset} text="值筛选" hot="V" sub active />
      <hr className="ml-[32px] border-[#e1e1e1]" />
      <div className="mt-[5px] mr-[6px] ml-[30px] flex h-[24px] shrink-0 items-center border border-[#ababab] pr-[2px] pb-px pl-px">
        <input aria-label="搜索" placeholder="搜索" className="min-w-0 flex-1 text-xs outline-none placeholder:text-[#666]" />
        <SearchIcon />
      </div>
      <div className="mt-[4px] mr-[6px] ml-[30px] h-[169px] shrink-0 border border-[#e1e1e1] pl-[12px]">
        <div className="relative flex flex-col font-['Noto_Sans_CJK_SC',sans-serif] text-xs text-[#333]">
          <div className="absolute top-[8px] left-0 h-[49px] border-l border-dotted border-[#777]" />
          {filterValues.map((v) => (
            <label key={v} className="flex h-[16px] items-center gap-[2px] leading-[14px]">
              <i className="w-[8px] border-t border-dotted border-[#777]" />
              <Tick size="size-[11px]" box="border-[#555]" mark="#000" />
              <span className="pb-px pl-px">{v}</span>
            </label>
          ))}
        </div>
      </div>
      <div className="mt-[20px] mr-[7px] flex justify-end gap-[11px] text-xs text-black">
        <button type="button" className="h-[28px] w-[73px] border border-[#adadad] bg-[#e1e1e1]">确定</button>
        <button type="button" className="h-[28px] w-[73px] border border-[#adadad] bg-[#e1e1e1]">取消</button>
      </div>
      <div className="mt-auto flex h-[11px] items-end justify-end border-t border-[#dcdfe3] bg-linear-to-b from-white to-[#f1f1f1] pr-[3px] pb-[2px]">
        <Svg w={6} h={6}>
          <path d="M4 0h2v2H4zM4 4h2v2H4zM0 4h2v2H0z" fill="#9a9a9a" />
        </Svg>
      </div>
    </div>
  )
}

function ValueFilterMenu() {
  const inset = 'w-[30px] pl-[4px]'
  const line = <hr className="mb-px ml-[31px] border-[#e1e1e1]" />
  return (
    <div role="menu" className="absolute top-[200px] left-[650px] w-[144px] border border-[#c1c1c1] bg-white p-px shadow-[2px_3px_4px_rgba(0,0,0,0.2)]">
      <MenuItem inset={inset} icon={<ClearFilterIcon />} text="清除筛选" hot="C" disabled />
      {line}
      <MenuItem inset={inset} text="等于" hot="E" tail="..." />
      <MenuItem inset={inset} text="不等于" hot="N" tail="..." />
      {line}
      <MenuItem inset={inset} text="大于" hot="G" tail="..." />
      <MenuItem inset={inset} text="大于或等于" hot="O" tail="..." active />
      <MenuItem inset={inset} text="小于" hot="L" tail="..." />
      <MenuItem inset={inset} text="小于或等于" hot="Q" tail="..." />
      {line}
      <MenuItem inset={inset} text="介于" hot="W" tail="..." />
      <MenuItem inset={inset} text="不介于" hot="B" tail="..." />
      {line}
      <MenuItem inset={inset} text="前 10 项" hot="T" tail="..." />
    </div>
  )
}

/* Red pointers and the mouse cursor that float above the menus */
function Pointers() {
  return (
    <>
      <svg width="104" height="98" viewBox="0 0 104 98" className="pointer-events-none absolute top-[112px] left-[583px] drop-shadow-[2px_3px_2px_rgba(0,0,0,0.45)]" aria-hidden="true">
        <path d="M96 6L22 77" stroke="#8b0000" strokeWidth="3.500" />
        <path d="M96 6L22 77" stroke="#fb0d0d" strokeWidth="2.500" />
        <path d="M5 92L20 70l3 6 6 3z" fill="#fb0d0d" stroke="#8b0000" strokeWidth="0.500" />
      </svg>
      <svg width="64" height="58" viewBox="0 0 64 58" className="pointer-events-none absolute top-[255px] left-[764px] drop-shadow-[2px_3px_2px_rgba(0,0,0,0.45)]" aria-hidden="true">
        <path d="M57 6L22 37" stroke="#8b0000" strokeWidth="3.500" />
        <path d="M57 6L22 37" stroke="#fb0d0d" strokeWidth="2.500" />
        <path d="M5 52l16-22 2 5 6 4z" fill="#fb0d0d" stroke="#8b0000" strokeWidth="0.500" />
      </svg>
      <svg width="12" height="19" viewBox="0 0 12 19" className="pointer-events-none absolute top-[316px] left-[773px]" aria-hidden="true">
        <path d="M.5 1v15L4 12.500l2.500 6 2.500-1L6.500 12h5z" fill="#fff" stroke="#223" />
      </svg>
    </>
  )
}

/* ---------- Shared form bits ---------- */

function SearchIcon() {
  return (
    <Svg w={13} h={13}>
      <circle cx="8" cy="5" r="4" stroke={BLUE} strokeWidth="1.500" />
      <path d="M5 8l-4 4" stroke={BLUE} strokeWidth="2.500" />
    </Svg>
  )
}

function Tick({ size, box, mark, off }: { size: string; box: string; mark: string; off?: boolean }) {
  const [on, setOn] = useState(!off)
  return (
    <span className={`relative flex shrink-0 ${size}`}>
      <input type="checkbox" checked={on} onChange={(e) => setOn(e.target.checked)} className={`m-0 appearance-none border bg-white ${size} ${box}`} />
      {on && (
        <svg viewBox="0 0 13 13" fill="none" className="pointer-events-none absolute inset-0 size-full" aria-hidden="true">
          <path d="M3 6.500l2.500 3L10 3.500" stroke={mark} strokeWidth="2" />
        </svg>
      )}
    </span>
  )
}

/* ---------- Field pane ---------- */

function FieldSelect({ value }: { value: string }) {
  return (
    <div className="relative mx-px mt-[2px]">
      <select aria-label={value} className="block h-[23px] w-full appearance-none border border-[#ababab] bg-white pl-[6px] text-xs text-[#333]">
        <option>{value}</option>
      </select>
      <Caret w={7} color="#000" className="pointer-events-none absolute top-[9px] right-[10px]" />
    </div>
  )
}

function Area({ label, icon, fields = [] }: { label: string; icon: ReactNode; fields?: string[] }) {
  return (
    <div>
      <h3 className="flex h-[24px] items-center gap-[6px] pb-[3px] pl-[4px] text-xs leading-[20px] text-[#444]">
        {icon}
        {label}
      </h3>
      <div className="h-[109px] bg-[#fdfdfd] pt-px">
        {fields.map((f) => (
          <FieldSelect key={f} value={f} />
        ))}
      </div>
    </div>
  )
}

function FieldPane() {
  return (
    <aside className="relative mt-[12px] flex w-[259px] shrink-0 flex-col border-l border-[#b9b9b9] pr-[13px] pl-[11px] text-xs text-[#444]">
      <div className="flex h-[46px] items-center">
        <h2 className="pt-[2px] text-[21px] text-[#217346]">数据透视表字段</h2>
        <button type="button" aria-label="任务窗格选项" className="mb-[4px] ml-auto">
          <Caret w={9} />
        </button>
        <button type="button" aria-label="关闭窗格" className="mb-[4px] ml-[8px]">
          <Svg w={10} h={10}>
            <path d="M1 1l8 8M9 1L1 9" stroke="#666" strokeWidth="2" />
          </Svg>
        </button>
      </div>
      <div className="flex h-[26px] items-center justify-between">
        <span>选择要添加到报表的字段:</span>
        <button type="button" aria-label="工具" className="flex h-[27px] w-[44px] items-center justify-center gap-[9px] border border-[#ababab] bg-[#fdfdfd]">
          <Svg w={13} h={13}>
            <circle cx="6.500" cy="6.500" r="3.500" stroke="#a5a5a5" strokeWidth="3" />
            <path d="M3.500 0v4M9.500 0v4M3.500 9v4M9.500 9v4M0 6.500h3M10 6.500h3" stroke="#a5a5a5" strokeWidth="2.500" />
          </Svg>
          <Caret w={7} />
        </button>
      </div>
      <div className="mt-[14px] flex h-[22px] items-center border border-[#ababab] bg-white pr-[2px] pb-px pl-px">
        <input aria-label="搜索字段" placeholder="搜索" className="min-w-0 flex-1 outline-none placeholder:text-[#666]" />
        <SearchIcon />
      </div>
      <div className="mt-[18px] flex h-[261px] flex-col bg-[#fdfdfd] pl-[2px]">
        {['班级', '科目', '平均分'].map((f) => (
          <label key={f} className="flex h-[21px] items-center gap-[6px] pb-[4px] font-bold text-[#333]">
            <Tick size="size-[13px]" box="border-[#ababab]" mark="#777" />
            {f}
          </label>
        ))}
        <a href="#more" className="mt-[9px] text-[#333]">更多表格...</a>
      </div>
      <hr className="mt-[15px] border-dotted border-[#b5b5b5]" />
      <p className="mt-[6px] pl-[3px]">在以下区间拖动字段:</p>
      <div className="mt-[17px] ml-[3px] grid grid-cols-2 gap-x-px">
        <div className="border-r border-[#b9b9b9] pr-[6px] pb-[6px]">
          <Area
            label="筛选器"
            icon={
              <Svg w={13} h={13}>
                <path d="M1 0h11v2L8 6v6H5V6L1 2z" fill="#a0a0a0" />
              </Svg>
            }
          />
        </div>
        <div className="pb-[6px] pl-px">
          <Area
            label="列"
            icon={
              <Svg w={13} h={13}>
                <path d="M2 1h4v10H2zM7 1h1v10H7zM9 1h1v10H9zM11 1h1v10h-1z" fill="#a0a0a0" />
              </Svg>
            }
          />
        </div>
        <div className="border-t border-r border-[#b9b9b9] pt-[5px] pr-[6px]">
          <Area
            label="行"
            icon={
              <Svg w={13} h={13}>
                <path d="M1 1h10v3H1zM1 5h10v1H1zM1 7h10v1H1zM1 9h10v1H1z" fill="#a0a0a0" />
              </Svg>
            }
            fields={['班级', '科目']}
          />
        </div>
        <div className="border-t border-[#b9b9b9] pt-[5px] pl-px">
          <Area
            label="值"
            icon={
              <Svg w={13} h={13}>
                <path d="M11 3V1.500H3.500L7 6l-3.500 4.500H11V9" stroke="#a0a0a0" strokeWidth="1.500" />
              </Svg>
            }
            fields={['平均值项:平均...']}
          />
        </div>
      </div>
      <div className="mt-[22px] flex h-[24px] items-center pl-[3px]">
        <label className="flex items-center gap-[6px]">
          <Tick size="size-[13px]" box="border-[#ababab]" mark="#777" off />
          推迟布局更新
        </label>
        <button type="button" disabled className="ml-auto h-[24px] w-[34px] bg-[#f8f8f8] text-[#a0a0a0]">更新</button>
      </div>
    </aside>
  )
}

/* ---------- Bottom bars ---------- */

const sheets = [
  { name: '员工信息', cls: 'w-[76px] text-[#444]' },
  { name: '田字格', cls: 'w-[62px] text-[#444]' },
  { name: 'XXX公司销售额', cls: 'mx-[2px] w-[111px] bg-[#bdd7ee] text-black' },
  { name: '课程表', cls: 'mx-[2px] w-[58px] bg-[#f4b084] text-black' },
  { name: 'Sheet5', cls: 'w-[67px] text-[#444]' },
]

function ArrowButton({ label, d }: { label: string; d: string }) {
  return (
    <button type="button" aria-label={label} className="flex size-[15px] shrink-0 items-center justify-center border border-[#ababab] bg-white">
      <Svg w={8} h={8}>
        <path d={d} fill="#666" />
      </Svg>
    </button>
  )
}

function SheetTabs() {
  return (
    <div className="flex h-[28px] shrink-0 border-t border-[#9b9b9b] text-[13px]">
      <div className="flex w-[99px] items-center gap-[23px] pl-[26px]">
        <Svg w={5} h={8}>
          <path d="M5 0v8L0 4z" fill="#c3c3c3" />
        </Svg>
        <Svg w={5} h={8}>
          <path d="M0 0v8l5-4z" fill="#c3c3c3" />
        </Svg>
      </div>
      <button type="button" className="-mt-px h-[25px] w-[64px] border-x border-b-2 border-x-[#ababab] border-b-[#217346] bg-white pt-px text-[#217346]">成绩表</button>
      {sheets.map((s) => (
        <div key={s.name} className="mt-[2px] flex h-[22px] border-r border-[#ababab]">
          <button type="button" className={`pb-[3px] whitespace-nowrap ${s.cls}`}>
            {s.name}
          </button>
        </div>
      ))}
      <button type="button" aria-label="新工作表" className="ml-[33px]">
        <Svg w={17} h={17}>
          <circle cx="8.500" cy="8.500" r="7.500" stroke="#777" />
          <path d="M4.500 8.500h8M8.500 4.500v8" stroke="#777" strokeWidth="2" />
        </Svg>
      </button>
      <div className="mr-[22px] ml-auto flex items-center">
        <div className="mr-[15px] flex flex-col gap-[2px]">
          <i className="size-[2px] bg-[#aaa]" />
          <i className="size-[2px] bg-[#aaa]" />
          <i className="size-[2px] bg-[#aaa]" />
        </div>
        <ArrowButton label="向左滚动" d="M6 0v8L2 4z" />
        <div className="h-[15px] w-[469px] bg-[#dadada]">
          <div className="h-[15px] w-[285px] border border-[#ababab] bg-white" />
        </div>
        <ArrowButton label="向右滚动" d="M2 0v8l4-4z" />
      </div>
    </div>
  )
}

function StatusBar() {
  return (
    <footer className="flex h-[19px] shrink-0 items-center border-t border-[#c6c6c6] bg-[#f1f1f1] pl-[6px] text-xs text-[#444]">
      <span className="w-[43px]">就绪</span>
      <span className="w-[41px]">数字</span>
      <Svg w={13} h={13}>
        <circle cx="3" cy="3" r="2.500" fill="#777" />
        <path d="M6 1h7v3H6z" fill="#777" />
        <path d="M1.500 6v6.500h11V4" stroke="#777" />
        <path d="M3 6h2v1H3zM6 6h2v1H6zM9 6h2v1H9zM3 9h2v1H3zM6 9h2v1H6zM9 9h2v1H9z" fill="#777" />
      </Svg>
      <div className="ml-auto flex h-full items-center">
        <button type="button" aria-label="普通" className="flex h-full w-[38px] items-center justify-center bg-[#c8c8c8]">
          <Svg w={13} h={13}>
            <path d="M.5.5h12v12H.5zM4.500 0v13M8.500 0v13M0 4.500h13M0 8.500h13" stroke="#666" />
          </Svg>
        </button>
        <button type="button" aria-label="页面布局" className="flex w-[38px] justify-center">
          <Svg w={14} h={13}>
            <path d="M.5.5h13v12H.5zM3.500 2.500h7v8h-7zM5 4.500h4M5 6.500h4M5 8.500h4" stroke="#777" />
          </Svg>
        </button>
        <button type="button" aria-label="分页预览" className="flex w-[38px] justify-center">
          <Svg w={14} h={13}>
            <path d="M.5.5h13v12H.5zM.5 7.500h8v-7M5.500.5v7" stroke="#777" />
          </Svg>
        </button>
        <button type="button" aria-label="缩小" className="ml-[5px] h-[2px] w-[6px] bg-[#666]" />
        <input
          type="range"
          aria-label="缩放"
          min={0}
          max={100}
          defaultValue={40}
          className="mx-[4px] h-px w-[100px] appearance-none bg-[#9a9a9a] [&::-webkit-slider-thumb]:h-[11px] [&::-webkit-slider-thumb]:w-[4px] [&::-webkit-slider-thumb]:appearance-none [&::-webkit-slider-thumb]:bg-[#555]"
        />
        <button type="button" aria-label="放大">
          <Svg w={8} h={8}>
            <path d="M0 4h8M4 0v8" stroke="#666" strokeWidth="2" />
          </Svg>
        </button>
        <span className="ml-[15px] w-[44px]">80%</span>
      </div>
    </footer>
  )
}

function Watermark() {
  return (
    <div className="pointer-events-none absolute right-[11px] bottom-[7px] flex items-center opacity-80">
      <svg width="43" height="42" viewBox="0 0 43 42" aria-hidden="true">
        <path d="M43 1C22 0 4 10 1 23c-1 7 3 11 8 12C5 24 17 9 43 1z" fill="#3b9bdc" />
        <path d="M34 8C20 11 11 20 12 29c6 3 14 0 18-7-4 2-8 2-11 1 3-6 8-11 15-15z" fill="#3a7fd0" />
        <path d="M20 22c7-1 13-3 17-7 5 4 6 9 3 14-6 7-17 10-26 9 11-2 18-6 19-13-4 2-9 1-13-3z" fill="#45b56b" />
        <path d="M4 38c12 0 22-3 29-10-4 9-14 13-26 11z" fill="#c6d94a" />
      </svg>
      <div>
        <div className="text-[21px] leading-[23px] font-bold text-[#3f86cf]">极光下载站</div>
        <div className="font-['Liberation_Sans',sans-serif] text-base leading-[18px] font-bold text-[#52b774]">www.xz7.com</div>
      </div>
    </div>
  )
}

export default function App() {
  return (
    <div className="relative flex h-screen w-full flex-col overflow-hidden bg-[#e6e6e6] font-['Noto_Sans','Noto_Sans_CJK_SC',sans-serif] select-none">
      <TitleBar />
      <Ribbon />
      <QuickAccess />
      <FormulaBar />
      <div className="flex min-h-0 flex-1">
        <div className="flex min-w-0 flex-1 flex-col pt-[10px]">
          <div className="flex min-h-0 flex-1">
            <main className="relative min-w-0 flex-1 overflow-hidden border-r border-[#9b9b9b]">
              <SheetTable />
              <Slicer
                title="班级"
                items={['1班', '2班', '3班']}
                frame="top-[44px] left-[805px] h-[167px] w-[162px] border-[#ed7d31]"
                head="h-[20px] border-[#ed7d31]"
                chip="bg-[#f8cbad]"
              />
              <Slicer
                title="科目"
                items={['数学', '英语', '语文']}
                frame="top-[39px] left-[976px] h-[165px] w-[159px] border-[#5b9bd5]"
                head="h-[18px] border-[#5b9bd5]"
                chip="bg-[#bdd7ee]"
              />
              <PivotChart />
              <FilterMenu />
              <ValueFilterMenu />
              <Pointers />
            </main>
            <div className="mt-[2px] flex w-[22px] flex-col pl-[3px]">
              <ArrowButton label="向上滚动" d="M0 6h8L4 2z" />
              <div className="w-[15px] flex-1 bg-[#dadada] pt-[246px]">
                <div className="h-[209px] border border-[#ababab] bg-white" />
              </div>
              <ArrowButton label="向下滚动" d="M0 2h8L4 6z" />
            </div>
          </div>
          <SheetTabs />
        </div>
        <FieldPane />
      </div>
      <StatusBar />
      <Watermark />
    </div>
  )
}
